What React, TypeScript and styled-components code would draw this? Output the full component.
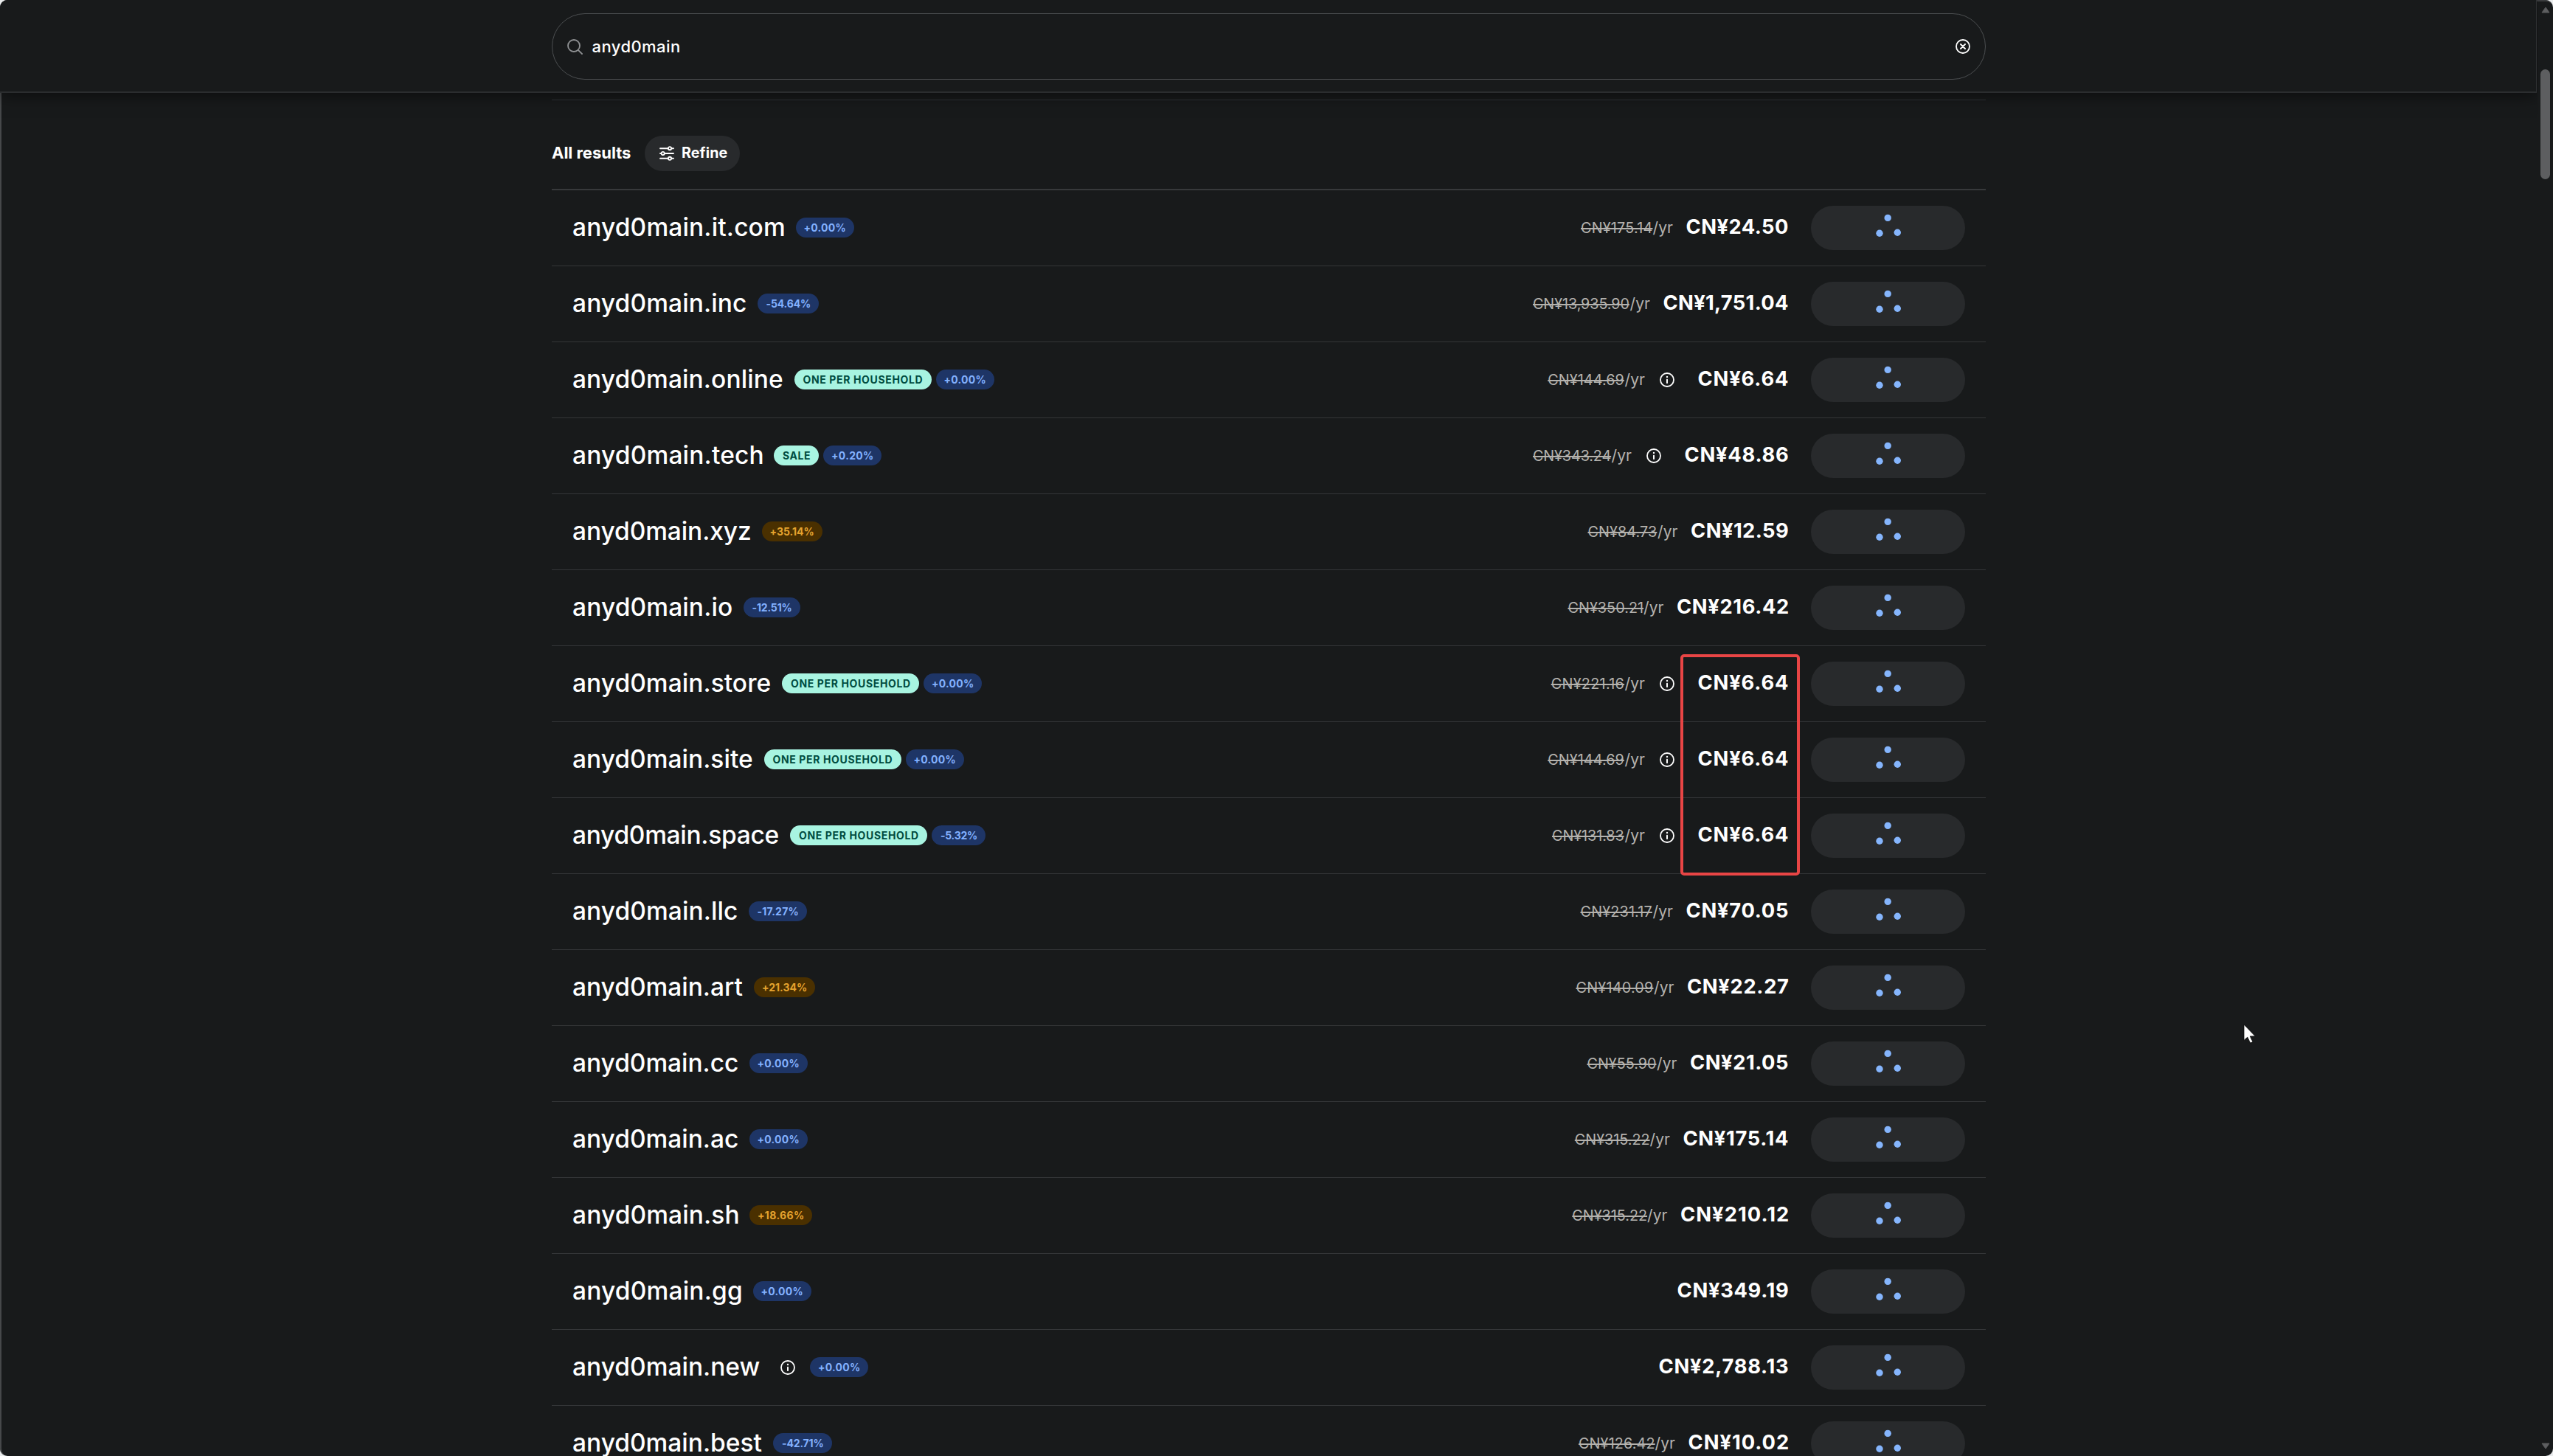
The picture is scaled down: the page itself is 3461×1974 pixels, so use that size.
import React, { useMemo } from 'react';
import styled, { createGlobalStyle, css } from 'styled-components';

const FONT = "Inter, 'Liberation Sans', sans-serif";

const GlobalStyle = createGlobalStyle`
  *, *::before, *::after { box-sizing: border-box; }
  html, body { margin: 0; height: 100%; overflow: hidden; background: #e9ebec; }
  body { font-family: ${FONT}; color: #fff; }
`;

/* ---------- text set to an exact measure ---------- */

type Measure = { size: number; weight: number };

const styles = {
  name: { size: 33.5, weight: 460 },
  price: { size: 27.3, weight: 700 },
  old: { size: 19.8, weight: 430 },
  per: { size: 21, weight: 400 },
  tag: { size: 14, weight: 700 },
  query: { size: 22, weight: 540 },
  heading: { size: 22, weight: 650 },
  button: { size: 19.7, weight: 650 },
} satisfies Record<string, Measure>;

const FittedSpan = styled.span<{ $size: number; $weight: number; $strike?: boolean; $shift?: number }>`
  display: inline-block;
  white-space: nowrap;
  font-size: ${p => p.$size}px;
  font-weight: ${p => p.$weight};
  line-height: 1.4;
  margin-top: ${p => (p.$shift ?? 0) * 2}px;
  ${p =>
    p.$strike &&
    css`
      text-decoration: line-through;
      text-decoration-thickness: 2px;
    `}
`;

let context: CanvasRenderingContext2D | null = null;

interface FittedProps {
  kind: keyof typeof styles;
  width: number;
  strike?: boolean;
  shift?: number;
  children: string;
}

/** Tracks a label so that its ink spans the given width. */
function Fitted({ kind, width, strike, shift, children }: FittedProps) {
  const { size, weight } = styles[kind];
  const { tracking, indent } = useMemo(() => {
    context ??= document.createElement('canvas').getContext('2d')!;
    context.font = `${weight} ${size}px ${FONT}`;
    const m = context.measureText(children);
    const ink = m.actualBoundingBoxLeft + m.actualBoundingBoxRight;
    return { tracking: (width - ink) / Math.max(1, children.length - 1), indent: m.actualBoundingBoxLeft };
  }, [children, size, weight, width]);
  return (
    <FittedSpan
      $size={size}
      $weight={weight}
      $strike={strike}
      $shift={shift}
      style={{ width, letterSpacing: tracking, textIndent: indent }}
    >
      {children}
    </FittedSpan>
  );
}

/* ---------- window ---------- */

const Window = styled.div`
  position: relative;
  display: grid;
  grid-template-columns: 3440px 1fr;
  width: 3461px;
  height: 1974px;
  overflow: hidden;
  border-radius: 10px;
  background: #181a1b;

  &::after {
    content: '';
    position: absolute;
    inset: 0;
    border-radius: 10px;
    border-top: 2px solid #3a3c3e;
    border-left: 2px solid #46484a;
    pointer-events: none;
  }
`;

const Page = styled.div`
  display: flex;
  flex-direction: column;
  height: 1974px;
  overflow: hidden;
`;

const Header = styled.header`
  position: relative;
  flex: none;
  display: flex;
  justify-content: center;
  width: 3439px;
  height: 126px;
  padding-top: 18px;
  padding-left: 1px;
  border-right: 1px solid #2f3133;
  border-bottom: 2px solid #2b2d2f;
  box-shadow: 0 4px 20px rgba(0, 0, 0, 0.5);
  background: #181a1b;
  z-index: 1;
`;

const SearchBox = styled.div`
  display: flex;
  align-items: center;
  width: 1944px;
  height: 90px;
  padding: 0 20px;
  border: 1px solid #4b4e50;
  border-radius: 45px;

  svg:first-child { margin-right: 13px; }
  svg:last-child { margin-left: auto; }
`;

const Content = styled.main`
  width: 1944px;
  margin: 9px auto 0;
  border-top: 1px solid #323537;
`;

const Toolbar = styled.div`
  display: flex;
  align-items: center;
  gap: 19px;
  height: 122px;
  padding: 24px 0 1px;
  border-bottom: 2px solid #37393b;
`;

const RefineButton = styled.button`
  display: flex;
  align-items: center;
  gap: 11px;
  width: 129px;
  height: 48px;
  padding: 0 0 0 20px;
  border: 0;
  border-radius: 24px;
  background: #282a2c;
  color: #fff;
  font-family: inherit;
`;

/* ---------- result rows ---------- */

const Row = styled.div`
  display: flex;
  align-items: center;
  height: 103px;
  padding: 0 28px 0 29px;
  border-bottom: 1px solid #343638;
`;

const Tags = styled.div`
  display: flex;
  align-items: center;
  gap: 6px;
  margin-left: 15.5px;
`;

const tones = {
  blue: ['#1e3566', '#83b1ff'],
  amber: ['#4a3000', '#e6a32e'],
  mint: ['#a8f4e1', '#004c40'],
};

const Tag = styled.span<{ $tone: keyof typeof tones }>`
  display: flex;
  align-items: center;
  height: 27px;
  margin-top: -1px;
  padding: 0 12px;
  border-radius: 13.5px;
  background: ${p => tones[p.$tone][0]};
  color: ${p => tones[p.$tone][1]};
`;

const TitleInfo = styled.span`
  display: flex;
  margin: 0 14px 0 13px;
`;

const Pricing = styled.div`
  display: flex;
  align-items: center;
  gap: 18.5px;
  margin-left: auto;
`;

const OldPrice = styled.span`
  display: flex;
  align-items: baseline;
  gap: 1px;
  color: #b4b2ae;
`;

const PriceInfo = styled.span`
  display: flex;
  margin: 0 14px 0 1.5px;
`;

const LoadingButton = styled.div`
  display: flex;
  align-items: center;
  justify-content: center;
  width: 209px;
  height: 60px;
  margin-left: 31px;
  border-radius: 30px;
  background: #282a2c;
`;

/* ---------- scrollbar and overlays ---------- */

const Scrollbar = styled.div`
  display: flex;
  flex-direction: column;
  align-items: center;
  padding: 9px 0 9px;

  svg:last-child { margin-top: auto; }
`;

const Thumb = styled.div`
  width: 13px;
  height: 149px;
  margin-top: 76px;
  border-radius: 7px;
  background: #5d5e60;
`;

const Highlight = styled.div`
  position: absolute;
  left: 2278px;
  top: 887px;
  width: 162px;
  height: 300px;
  border: 4px solid #e84545;
  border-radius: 5px;
`;

const Pointer = styled.svg`
  position: absolute;
  left: 3041px;
  top: 1387px;
`;

/* ---------- icons ---------- */

const InfoIcon = () => (
  <svg width="20" height="20" viewBox="0 0 20 20" fill="none">
    <circle cx="10" cy="10" r="9" stroke="#fff" strokeWidth="1.8" />
    <rect x="9" y="8.8" width="2" height="6.2" rx="0.8" fill="#fff" />
    <circle cx="10" cy="6" r="1.2" fill="#fff" />
  </svg>
);

const SearchIcon = () => (
  <svg width="21" height="21" viewBox="0 0 21 21" fill="none" stroke="#8f9193" strokeWidth="1.8" strokeLinecap="round">
    <circle cx="9" cy="9" r="8" />
    <path d="M14.8 14.8 20 20" />
  </svg>
);

const ClearIcon = () => (
  <svg width="20" height="20" viewBox="0 0 20 20" fill="none" stroke="#fff" strokeWidth="1.8" strokeLinecap="round">
    <circle cx="10" cy="10" r="9" />
    <path d="m7 7 6 6m0-6-6 6" strokeWidth="2" />
  </svg>
);

const SlidersIcon = () => (
  <svg width="20" height="20" viewBox="0 0 20 20" fill="none" stroke="#fff" strokeWidth="1.9" strokeLinecap="round">
    <path d="M1 3.2h10.5M16.5 3.2H19M1 10h1M7 10h12M1 16.8h10.5M16.5 16.8H19" />
    <circle cx="14" cy="3.2" r="2.1" />
    <circle cx="4.7" cy="10" r="2.1" />
    <circle cx="14" cy="16.8" r="2.1" />
  </svg>
);

const Spinner = () => (
  <svg width="36" height="40" viewBox="-18 -20 36 40" fill="#85b5fd">
    <circle cx="-0.8" cy="-13.6" r="4.7" />
    <circle cx="-12" cy="7.3" r="4.7" />
    <circle cx="12.3" cy="6.3" r="4.7" />
  </svg>
);

const Arrow = ({ down }: { down?: boolean }) => (
  <svg width="12" height="9" viewBox="0 0 12 9" fill="#5d5e60" stroke="#5d5e60" strokeLinejoin="round">
    <path d={down ? 'M1 1h10L6 8Z' : 'M1 8h10L6 1Z'} />
  </svg>
);

/* ---------- data: texts with their widths ---------- */

type Label = [text: string, width: number];

interface Result {
  name: Label;
  promo?: Label;
  delta: Label;
  up?: boolean;
  titleInfo?: boolean;
  priceInfo?: boolean;
  old?: Label;
  price: Label;
}

const household: Label = ['ONE PER HOUSEHOLD', 162];
const flat: Label = ['+0.00%', 55];
const six: Label = ['CN¥6.64', 121.5];

const results: Result[] = [
  { name: ['anyd0main.it.com', 286], delta: flat, old: ['CN¥175.14', 95.5], price: ['CN¥24.50', 137.5] },
  { name: ['anyd0main.inc', 234], delta: ['-54.64%', 59.5], old: ['CN¥13,935.90', 129.5], price: ['CN¥1,751.04', 168.5] },
  { name: ['anyd0main.online', 284], promo: household, delta: flat, priceInfo: true, old: ['CN¥144.69', 102.2], price: six },
  { name: ['anyd0main.tech', 256.5], promo: ['SALE', 37], delta: ['+0.20%', 55], priceInfo: true, old: ['CN¥343.24', 104.5], price: ['CN¥48.86', 139.5] },
  { name: ['anyd0main.xyz', 240], delta: ['+35.14%', 58], up: true, old: ['CN¥84.73', 92.5], price: ['CN¥12.59', 131] },
  { name: ['anyd0main.io', 215], delta: ['-12.51%', 53], old: ['CN¥350.21', 100.5], price: ['CN¥216.42', 150] },
  { name: ['anyd0main.store', 267.5], promo: household, delta: flat, priceInfo: true, old: ['CN¥221.16', 97.8], price: six },
  { name: ['anyd0main.site', 243], promo: household, delta: flat, priceInfo: true, old: ['CN¥144.69', 102.2], price: six },
  { name: ['anyd0main.space', 278.5], promo: household, delta: ['-5.32%', 49], priceInfo: true, old: ['CN¥131.83', 96.5], price: six },
  { name: ['anyd0main.llc', 222], delta: ['-17.27%', 55], old: ['CN¥231.17', 96], price: ['CN¥70.05', 137.5] },
  { name: ['anyd0main.art', 229.5], delta: ['+21.34%', 59], up: true, old: ['CN¥140.09', 103.5], price: ['CN¥22.27', 136] },
  { name: ['anyd0main.cc', 223], delta: flat, old: ['CN¥55.90', 92.5], price: ['CN¥21.05', 132] },
  { name: ['anyd0main.ac', 223], delta: flat, old: ['CN¥315.22', 99.7], price: ['CN¥175.14', 141.5] },
  { name: ['anyd0main.sh', 223.5], delta: ['+18.66%', 61], up: true, old: ['CN¥315.22', 99.7], price: ['CN¥210.12', 145] },
  { name: ['anyd0main.gg', 228], delta: flat, price: ['CN¥349.19', 149.5] },
  { name: ['anyd0main.new', 252.5], delta: flat, titleInfo: true, price: ['CN¥2,788.13', 174.5] },
  { name: ['anyd0main.best', 255.5], delta: ['-42.71%', 55.5], old: ['CN¥126.42', 101.5], price: ['CN¥10.02', 134.5] },
];

function ResultRow({ item }: { item: Result }) {
  return (
    <Row>
      <Fitted kind="name" width={item.name[1]} shift={-1}>{item.name[0]}</Fitted>
      <Tags>
        {item.titleInfo && <TitleInfo><InfoIcon /></TitleInfo>}
        {item.promo && (
          <Tag $tone="mint"><Fitted kind="tag" width={item.promo[1]}>{item.promo[0]}</Fitted></Tag>
        )}
        <Tag $tone={item.up ? 'amber' : 'blue'}>
          <Fitted kind="tag" width={item.delta[1]}>{item.delta[0]}</Fitted>
        </Tag>
      </Tags>
      <Pricing>
        {item.old && (
          <OldPrice>
            <Fitted kind="old" width={item.old[1]} strike>{item.old[0]}</Fitted>
            <Fitted kind="per" width={27.5}>/yr</Fitted>
          </OldPrice>
        )}
        {item.priceInfo && <PriceInfo><InfoIcon /></PriceInfo>}
        <Fitted kind="price" width={item.price[1]} shift={-1}>{item.price[0]}</Fitted>
      </Pricing>
      <LoadingButton><Spinner /></LoadingButton>
    </Row>
  );
}

export default function App() {
  return (
    <>
      <GlobalStyle />
      <Window>
        <Page>
          <Header>
            <SearchBox>
              <SearchIcon />
              <Fitted kind="query" width={118.5}>anyd0main</Fitted>
              <ClearIcon />
            </SearchBox>
          </Header>
          <Content>
            <Toolbar>
              <Fitted kind="heading" width={107}>All results</Fitted>
              <RefineButton>
                <SlidersIcon />
                <Fitted kind="button" width={60.5}>Refine</Fitted>
              </RefineButton>
            </Toolbar>
            {results.map(item => <ResultRow key={item.name[0]} item={item} />)}
          </Content>
        </Page>
        <Scrollbar>
          <Arrow />
          <Thumb />
          <Arrow down />
        </Scrollbar>
        <Highlight />
        <Pointer width="20" height="30" viewBox="0 0 20 30">
          <path d="M1 2v21.5l4.8-4.400 3.800 8 3.400-1.500-3.700-7.700h7Z" fill="#fff" stroke="#0b0c0c" strokeWidth="0.8" />
        </Pointer>
      </Window>
    </>
  );
}
